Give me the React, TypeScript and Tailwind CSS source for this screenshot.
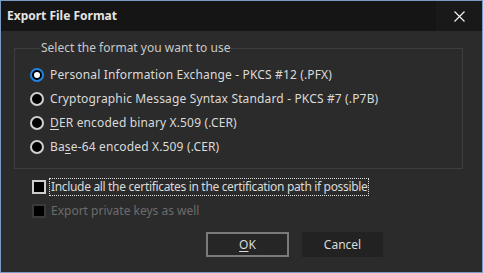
import React from "react";

const font = { fontFamily: '"Noto Sans", "Open Sans", sans-serif' };

const formats = [
  { label: "Personal Information Exchange - PKCS #12 (.PFX)", checked: true },
  { label: "Cryptographic Message Syntax Standard - PKCS #7 (.P7B)", checked: false },
  { label: "DER encoded binary X.509 (.CER)", checked: false, u: 0 },
  { label: "Base-64 encoded X.509 (.CER)", checked: false, u: 2 },
];

function Label({ text, u }: { text: string; u?: number }) {
  if (u === undefined) return <>{text}</>;
  return (
    <>
      {text.slice(0, u)}
      <span className="underline underline-offset-2">{text[u]}</span>
      {text.slice(u + 1)}
    </>
  );
}

function Radio({ checked }: { checked: boolean }) {
  return checked ? (
    <span className="w-[14px] h-[14px] rounded-full border-2 border-[#1f86e8] bg-black flex items-center justify-center shrink-0">
      <span className="w-[6px] h-[6px] rounded-full bg-white" />
    </span>
  ) : (
    <span className="w-[14px] h-[14px] rounded-full border-2 border-[#d0d0d0] bg-black shrink-0" />
  );
}

const App = () => {
  return (
    <div
      className="w-[483px] h-[273px] border border-[#7c9bc4] bg-[#2b2b2b] flex flex-col text-[12px] text-[#dadada]"
      style={font}
    >
      <div className="h-[30px] bg-[#151515] flex items-center justify-between shrink-0">
        <span className="pl-[6px] font-bold text-[#e4e4e4]">Export File Format</span>
        <div className="w-[46px] h-full bg-[#191919] flex items-center justify-center">
          <svg width="11" height="11" viewBox="0 0 11 11">
            <path d="M0.5 0.5 L10.5 10.5 M10.5 0.5 L0.5 10.5" stroke="#f0f0f0" strokeWidth="1.2" />
          </svg>
        </div>
      </div>

      <div className="flex flex-col pl-[13px] pr-[19px]">
        <fieldset className="mt-[9px] border border-[#3e3e3e] pl-[15px] pb-[9px]">
          <legend className="ml-[10px] px-[1px] leading-[16px] text-[#c9c9c9]">
            Select the format you want to use
          </legend>
          <div className="flex flex-col pt-[7px]">
            {formats.map((f) => (
              <div key={f.label} className="h-[24px] flex items-center gap-[6px]">
                <Radio checked={f.checked} />
                <span className="leading-[16px] tracking-[0.15px]">
                  <Label text={f.label} u={f.u} />
                </span>
              </div>
            ))}
          </div>
        </fieldset>

        <div className="flex flex-col pl-[18px]">
          <div className="mt-[9px] h-[18px] flex items-center gap-[3px]">
            <span className="w-[14px] h-[14px] border-2 border-[#cdcdcd] bg-black shrink-0" />
            <span className="border border-dotted border-[#e0e0e0] px-[1px] leading-[16px] tracking-[-0.33px]">
              Include all the certificates in the certification path if possible
            </span>
          </div>
          <div className="mt-[6px] h-[18px] flex items-center gap-[4px]">
            <span className="w-[14px] h-[14px] border-2 border-[#3a3a3a] bg-black shrink-0" />
            <span className="px-[1px] leading-[16px] text-[#6c6c6c]">Export private keys as well</span>
          </div>
        </div>

        <div className="mt-[12px] flex justify-end gap-[13px] pr-[80px]">
          <button className="w-[83px] h-[25px] border-2 border-[#7a7a7a] bg-[#262626] flex items-center justify-center">
            <span className="underline underline-offset-2">O</span>K
          </button>
          <button className="w-[81px] h-[25px] bg-[#222222] flex items-center justify-center">
            Cancel
          </button>
        </div>
      </div>
    </div>
  );
};

export default App;
